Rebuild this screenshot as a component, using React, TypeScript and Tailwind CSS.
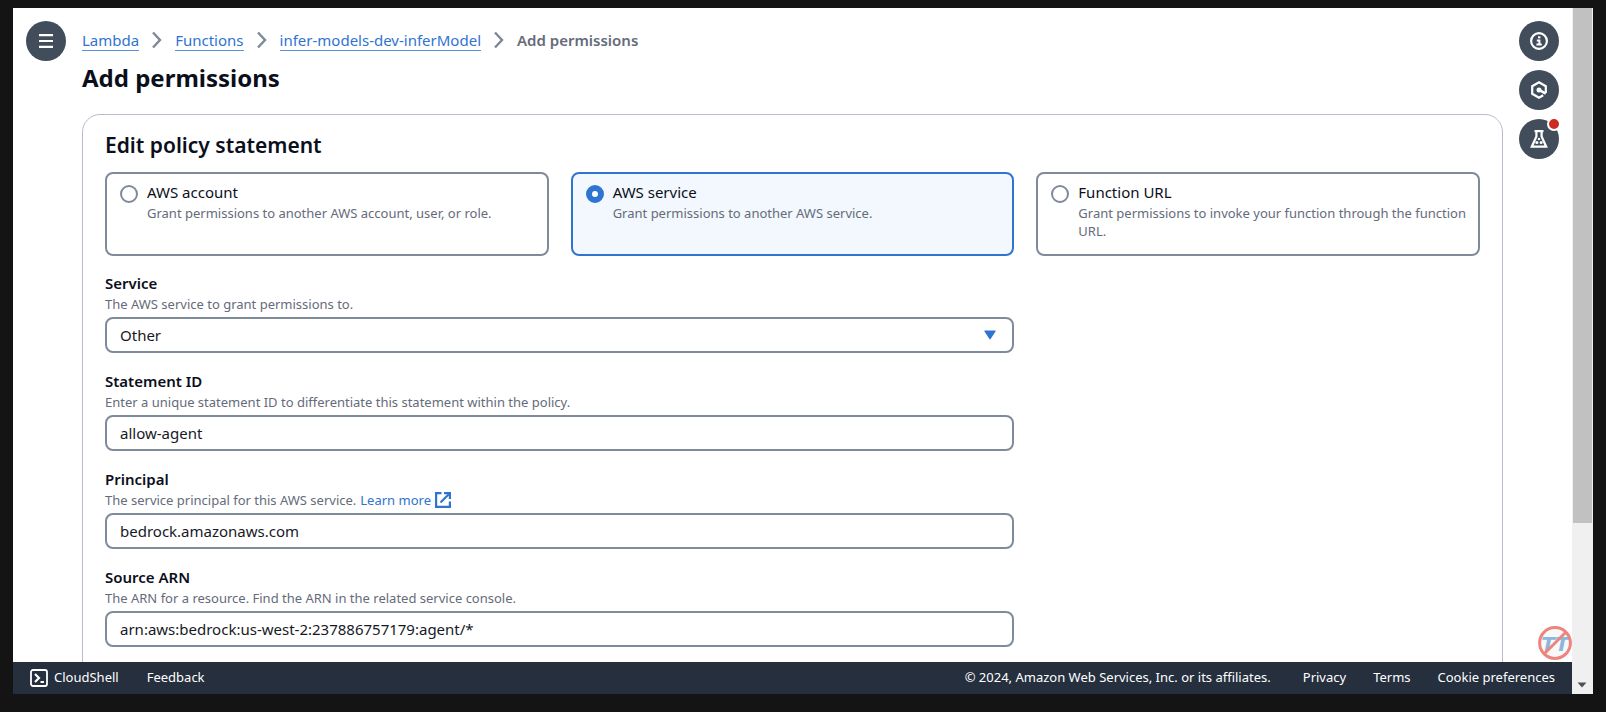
import React, { useState } from "react";

const tiles = [
  {
    id: "account",
    title: "AWS account",
    text: "Grant permissions to another AWS account, user, or role.",
  },
  {
    id: "service",
    title: "AWS service",
    text: "Grant permissions to another AWS service.",
  },
  {
    id: "url",
    title: "Function URL",
    text: "Grant permissions to invoke your function through the function URL.",
  },
];

const crumbs = ["Lambda", "Functions", "infer-models-dev-inferModel"];

function ChevronIcon() {
  return (
    <svg width="10" height="18" viewBox="0 0 10 18" fill="none" stroke="#7d8998" strokeWidth="2.4">
      <path d="M1 1.5L8 9L1 16.5" />
    </svg>
  );
}

function InfoIcon() {
  return (
    <svg width="18" height="18" viewBox="0 0 18 18" fill="none" stroke="#fff" strokeWidth="2">
      <circle cx="9" cy="9" r="7.9" strokeWidth="2.2" />
      <path d="M6.8 8.4H9.4V12.4M6.4 12.6H11.8" />
      <path d="M8 5.3H10.4" />
    </svg>
  );
}

function HexagonIcon() {
  return (
    <svg width="18" height="18" viewBox="0 0 18 18" fill="none" stroke="#fff" strokeWidth="2.2">
      <path d="M15.8 12V5.2L9 1.3L2.2 5.2V12.8L9 16.7L13.2 14.3" />
      <path d="M9.5 9.2L15.8 12.6" strokeWidth="2.6" />
      <circle cx="9" cy="9" r="2.5" fill="#fff" stroke="none" />
    </svg>
  );
}

function FlaskIcon() {
  return (
    <svg width="18" height="18" viewBox="0 0 18 18" fill="none" stroke="#fff" strokeWidth="2.2">
      <path d="M4.5 1.1H13.5" />
      <path d="M6.4 1V6.5L1.8 16.7H16.2L11.6 6.5V1" />
      <g fill="#fff" stroke="none">
        <circle cx="9" cy="9" r="1.2" />
        <circle cx="6.9" cy="12.6" r="1.5" />
        <circle cx="11.1" cy="12.6" r="1.5" />
      </g>
    </svg>
  );
}

function ExternalIcon() {
  return (
    <svg width="16" height="16" viewBox="0 0 16 16" fill="none" stroke="#2f74d0" strokeWidth="2.2">
      <path d="M6.5 1.1H1.1V14.9H14.9V9.5" />
      <path d="M9 1.1H14.9V7" />
      <path d="M15 1L5.5 10.5" />
    </svg>
  );
}

function CloudShellIcon() {
  return (
    <svg width="18" height="18" viewBox="0 0 18 18" fill="none" stroke="#fff" strokeWidth="1.8">
      <rect x="1" y="1" width="16" height="16" rx="2" />
      <path d="M5 5L9 9L5 13" strokeWidth="2.2" />
      <path d="M10.5 13H14" strokeWidth="2" />
    </svg>
  );
}

function BlockedBadge() {
  return (
    <svg width="34" height="34" viewBox="0 0 34 34" className="absolute right-0 bottom-[34px]">
      <circle cx="17" cy="17" r="15" fill="#f8f8f8" />
      <text
        x="17"
        y="25"
        textAnchor="middle"
        fontFamily="'DejaVu Sans', sans-serif"
        fontSize="20"
        fontWeight="bold"
        fontStyle="italic"
        fill="#8ab8dd"
      >
        TT
      </text>
      <circle cx="17" cy="17" r="15.4" fill="none" stroke="#ee8480" strokeWidth="3" />
      <path d="M6.5 27.5L27.5 6.5" stroke="#ee8480" strokeWidth="3" />
    </svg>
  );
}

type FieldProps = {
  id: string;
  label: string;
  hint: React.ReactNode;
  children: React.ReactNode;
};

function Field({ id, label, hint, children }: FieldProps) {
  return (
    <div>
      <label htmlFor={id} className="block text-[15px] leading-[22px] font-semibold">
        {label}
      </label>
      <div className="mb-[3px] flex items-center text-[13px] leading-5 text-[#656b7a]">{hint}</div>
      {children}
    </div>
  );
}

const inputClass =
  "block h-9 w-full rounded-lg border-2 border-[#7f8b9a] bg-white px-[13px] text-[15px] text-[#16191f] outline-none";

const roundButton =
  "relative flex size-10 shrink-0 items-center justify-center rounded-full bg-[#424d5c]";

export default function App() {
  const [principalType, setPrincipalType] = useState("service");
  const [statementId, setStatementId] = useState("allow-agent");
  const [principal, setPrincipal] = useState("bedrock.amazonaws.com");
  const [sourceArn, setSourceArn] = useState("arn:aws:bedrock:us-west-2:237886757179:agent/*");

  return (
    <div className="h-screen overflow-hidden bg-[#141414] pt-2 pr-[13px] pb-[18px] pl-[13px] font-['Noto_Sans',sans-serif] text-[#0b0f1c]">
      <div className="flex h-full bg-white">
        <div className="relative flex min-w-0 flex-1 flex-col">
          <div className="flex min-h-0 flex-1 overflow-hidden pr-[13px] pl-[13px]">
            <div className="w-14 shrink-0 pt-[13px]">
              <button aria-label="Open menu" className={roundButton}>
                <svg width="16" height="14" viewBox="0 0 16 14" stroke="#fff" strokeWidth="2.2">
                  <path d="M1 1.2H15M1 7H15M1 12.8H15" />
                </svg>
              </button>
            </div>

            <main className="min-w-0 flex-1 pt-[19px]">
              <nav aria-label="Breadcrumb" className="flex items-center gap-[13px] text-[15px] leading-[26px]">
                {crumbs.map((crumb) => (
                  <React.Fragment key={crumb}>
                    <a href="#" className="border-b border-[#5a93e0] leading-[20px] text-[#2f74d0]">
                      {crumb}
                    </a>
                    <ChevronIcon />
                  </React.Fragment>
                ))}
                <span className="font-semibold text-[#656b7a]">Add permissions</span>
              </nav>
              <h1 className="mt-2 text-2xl leading-[34px] font-bold">Add permissions</h1>

              <section className="mt-[19px] h-[700px] rounded-[18px] border border-[#b6bec9] px-[22px] pt-4">
                <h2 className="text-[21px] leading-7 font-semibold">Edit policy statement</h2>

                <div className="mt-[13px] grid grid-cols-3 gap-x-[22px] gap-y-4">
                  {tiles.map((tile) => (
                    <label
                      key={tile.id}
                      htmlFor={tile.id}
                      className="flex gap-[9px] rounded-lg border-2 border-[#7f8b9a] pt-[7px] pr-1 pb-[14px] pl-[13px] has-checked:border-[#2f74d0] has-checked:bg-[#f2f8fd]"
                    >
                      <input
                        type="radio"
                        id={tile.id}
                        name="principalType"
                        checked={principalType === tile.id}
                        onChange={() => setPrincipalType(tile.id)}
                        className="mt-1 size-[18px] shrink-0 appearance-none rounded-full border-2 border-[#7f8b9a] bg-white checked:border-[6px] checked:border-[#2f74d0]"
                      />
                      <span>
                        <span className="block text-[15px] leading-[23px]">{tile.title}</span>
                        <span className="block text-[13px] leading-[18px] text-[#656b7a]">{tile.text}</span>
                      </span>
                    </label>
                  ))}

                  <div className="col-span-2 flex flex-col gap-[17px]">
                    <Field id="serviceName" label="Service" hint="The AWS service to grant permissions to.">
                      <div className="relative">
                        <select id="serviceName" className={`${inputClass} appearance-none`}>
                          <option>Other</option>
                        </select>
                        <svg
                          width="12"
                          height="10"
                          viewBox="0 0 12 10"
                          fill="#2f74d0"
                          className="pointer-events-none absolute top-[13px] right-[18px]"
                        >
                          <path d="M1 0.5H11Q12 0.5 11.5 1.5L6.6 9Q6 9.8 5.4 9L0.5 1.5Q0 0.5 1 0.5Z" />
                        </svg>
                      </div>
                    </Field>
                    <Field
                      id="statementId"
                      label="Statement ID"
                      hint="Enter a unique statement ID to differentiate this statement within the policy."
                    >
                      <input
                        id="statementId"
                        value={statementId}
                        onChange={(e) => setStatementId(e.target.value)}
                        className={inputClass}
                      />
                    </Field>
                    <Field
                      id="principal"
                      label="Principal"
                      hint={
                        <>
                          The service principal for this AWS service.
                          <a href="#" className="ml-1 flex items-center gap-1 text-[#2f74d0]">
                            Learn more
                            <ExternalIcon />
                          </a>
                        </>
                      }
                    >
                      <input
                        id="principal"
                        value={principal}
                        onChange={(e) => setPrincipal(e.target.value)}
                        className={inputClass}
                      />
                    </Field>
                    <Field
                      id="sourceArn"
                      label="Source ARN"
                      hint="The ARN for a resource. Find the ARN in the related service console."
                    >
                      <input
                        id="sourceArn"
                        value={sourceArn}
                        onChange={(e) => setSourceArn(e.target.value)}
                        className={inputClass}
                      />
                    </Field>
                  </div>
                </div>
              </section>
            </main>

            <aside className="ml-4 flex shrink-0 flex-col gap-[9px] pt-[13px]">
              <button aria-label="Info" className={roundButton}>
                <InfoIcon />
              </button>
              <button aria-label="Amazon Q" className={roundButton}>
                <HexagonIcon />
              </button>
              <button aria-label="Tutorials" className={roundButton}>
                <FlaskIcon />
                <span className="absolute -top-[2px] -right-[2px] size-[14px] rounded-full border-2 border-white bg-[#cc2b22]" />
              </button>
            </aside>
          </div>

          <footer className="flex h-8 shrink-0 items-center bg-[#252f3e] px-[17px] text-[13px] text-white">
            <button className="flex items-center gap-1.5">
              <CloudShellIcon />
              CloudShell
            </button>
            <button className="ml-7">Feedback</button>
            <span className="ml-auto">© 2024, Amazon Web Services, Inc. or its affiliates.</span>
            <a href="#" className="ml-8">Privacy</a>
            <a href="#" className="ml-[27px]">Terms</a>
            <a href="#" className="ml-[27px]">Cookie preferences</a>
          </footer>
          <BlockedBadge />
        </div>

        <div className="flex w-[21px] shrink-0 flex-col justify-between bg-[#f0f0f0]">
          <div className="mx-px h-3/4 bg-[#c1c1c1]" />
          <svg width="20" height="18" viewBox="0 0 20 18" fill="#505050">
            <path d="M5.5 6.5H14.5L10 11.5Z" />
          </svg>
        </div>
      </div>
    </div>
  );
}
